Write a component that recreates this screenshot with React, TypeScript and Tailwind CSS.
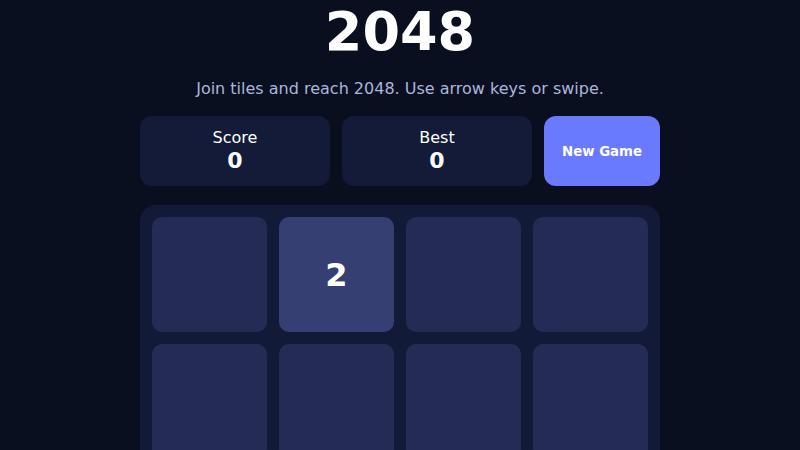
const TILES = [0, 2, 0, 0, 0, 0, 0, 0, 0, 0, 0, 0, 0, 0, 0, 0]

export default function App() {
  return (
    <div className="min-h-[450px] bg-[#0a0f1f] text-white font-['DejaVu_Sans',sans-serif] overflow-hidden">
      <div className="w-[520px] mx-auto pt-[5px] flex flex-col items-center">
        <h1 className="text-[54px] leading-none font-bold">2048</h1>
        <p className="mt-[22px] text-[16px] leading-none text-[#aab6dc]">
          Join tiles and reach 2048. Use arrow keys or swipe.
        </p>
        <div className="mt-[19px] w-full flex gap-3 h-[70px]">
          <div className="flex-1 rounded-xl bg-[#131b38] flex flex-col items-center justify-center gap-[2px] pb-[2px]">
            <span className="text-[16px] leading-tight">Score</span>
            <span className="text-[22px] leading-none font-bold">0</span>
          </div>
          <div className="flex-1 rounded-xl bg-[#131b38] flex flex-col items-center justify-center gap-[2px] pb-[2px]">
            <span className="text-[16px] leading-tight">Best</span>
            <span className="text-[22px] leading-none font-bold">0</span>
          </div>
          <button className="w-[116px] rounded-xl bg-[#6a7aff] text-[13.3px] font-bold pt-[2px]">
            New Game
          </button>
        </div>
        <div className="mt-[19px] w-full rounded-2xl bg-[#121a38] p-3 grid grid-cols-4 gap-3">
          {TILES.map((v, i) => (
            <div
              key={i}
              className={`h-[115px] rounded-[10px] flex items-center justify-center text-[32px] font-bold ${
                v ? 'bg-[#353f72]' : 'bg-[#242c56]'
              }`}
            >
              {v ? v : ''}
            </div>
          ))}
        </div>
      </div>
    </div>
  )
}
